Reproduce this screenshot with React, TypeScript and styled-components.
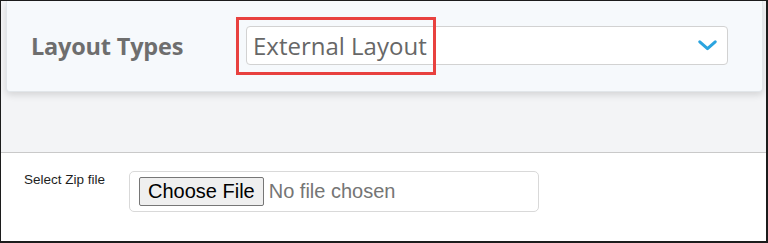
import styled, { createGlobalStyle } from 'styled-components';

const GlobalStyle = createGlobalStyle`
  html, body {
    margin: 0;
    padding: 0;
    background: #ffffff;
  }
  * {
    box-sizing: border-box;
  }
`;

const App: React.FC = () => {
  return (
    <>
      <GlobalStyle />
      <Frame>
        <TypeCard>
          <TypeLabel>Layout Types</TypeLabel>
          <SelectBox>
            <SelectValue>External Layout</SelectValue>
            <Chevron width="19" height="11" viewBox="0 0 19 11">
              <polyline
                points="1.8,1.8 9.5,8.6 17.2,1.8"
                fill="none"
                stroke="#2ba4df"
                strokeWidth="3"
                strokeLinecap="round"
                strokeLinejoin="round"
              />
            </Chevron>
          </SelectBox>
          <Highlight />
        </TypeCard>
        <UploadPanel>
          <FieldRow>
            <FieldLabel>Select Zip file</FieldLabel>
            <FileBox>
              <ChooseButton type="button">Choose File</ChooseButton>
              <NoFile>No file chosen</NoFile>
            </FileBox>
          </FieldRow>
        </UploadPanel>
      </Frame>
    </>
  );
};

const Frame = styled.div`
  width: 768px;
  height: 243px;
  display: flex;
  flex-direction: column;
  background: #f3f4f6;
  border-style: solid;
  border-color: #1c1c1c;
  border-width: 1px 2px 2px 1px;
  overflow: hidden;
`;

const TypeCard = styled.div`
  position: relative;
  display: flex;
  align-items: center;
  height: 91px;
  margin: 0 3px 0 5px;
  padding: 0 0 1px 24px;
  background: #f6f9fc;
  border: 1px solid #e2e6ea;
  border-top: none;
  border-radius: 0 0 4px 4px;
  box-shadow: 0 3px 7px rgba(0, 0, 0, 0.13);
`;

const TypeLabel = styled.span`
  width: 215px;
  flex-shrink: 0;
  font-family: 'Open Sans', sans-serif;
  font-weight: 700;
  font-size: 23.5px;
  letter-spacing: -0.2px;
  color: #6e6e6e;
`;

const SelectBox = styled.div`
  display: flex;
  align-items: center;
  justify-content: space-between;
  width: 482px;
  height: 39px;
  padding: 0 10px 0 6px;
  background: #ffffff;
  border: 1px solid #d2d2d2;
  border-radius: 4px;
`;

const SelectValue = styled.span`
  font-family: 'Open Sans', sans-serif;
  font-size: 24px;
  color: #676767;
  line-height: 1;
`;

const Chevron = styled.svg`
  display: block;
`;

const Highlight = styled.div`
  position: absolute;
  left: 229px;
  top: 16px;
  width: 200px;
  height: 58px;
  border: 3px solid #e8413f;
  pointer-events: none;
`;

const UploadPanel = styled.div`
  flex: 1;
  margin-top: 60px;
  padding: 18px 0 0 23px;
  background: #ffffff;
  border-top: 1px solid #c9c9c9;
`;

const FieldRow = styled.div`
  display: flex;
  align-items: flex-start;
`;

const FieldLabel = styled.span`
  width: 105px;
  flex-shrink: 0;
  margin-top: 1px;
  font-family: 'Liberation Sans', Arial, sans-serif;
  font-size: 13.5px;
  line-height: 16px;
  color: #1e1e1e;
`;

const FileBox = styled.div`
  display: flex;
  align-items: center;
  width: 410px;
  height: 41px;
  padding: 0 9px;
  border: 1px solid #d9d9d9;
  border-radius: 5px;
`;

const ChooseButton = styled.button`
  height: 29px;
  padding: 0 8px;
  font-family: 'Liberation Sans', Arial, sans-serif;
  font-size: 20px;
  color: #000000;
  background: #efefef;
  border: 1px solid #767676;
  border-radius: 2px;
`;

const NoFile = styled.span`
  margin-left: 5px;
  font-family: 'Liberation Sans', Arial, sans-serif;
  font-size: 20px;
  color: #757575;
`;

export default App;
